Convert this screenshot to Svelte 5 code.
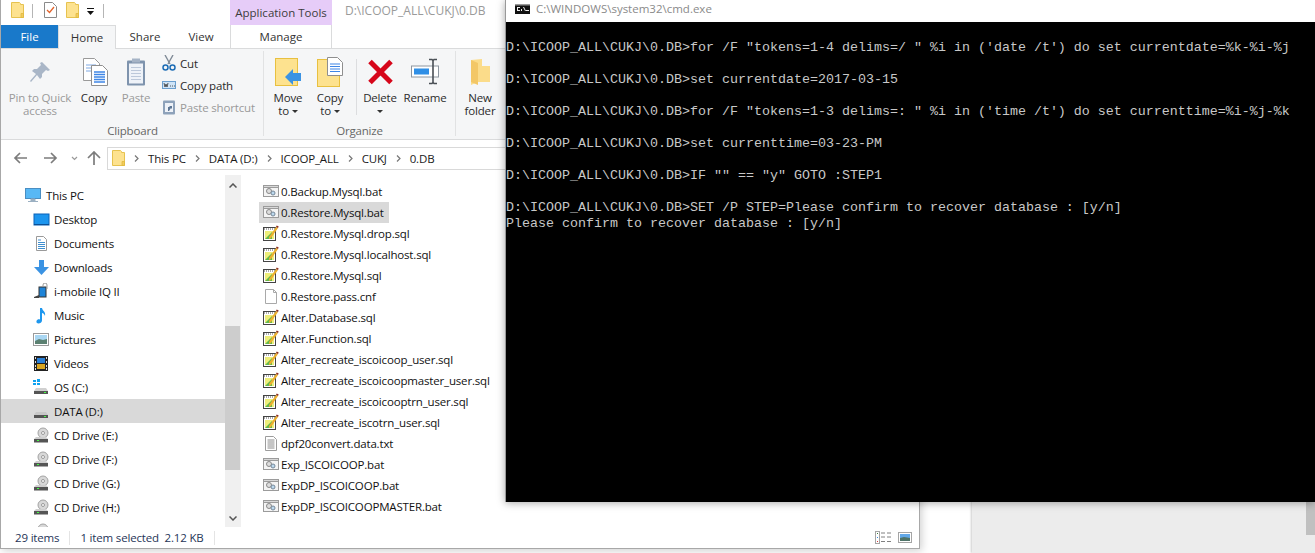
<script lang="ts">
  const navItems = [
    { label: "Desktop", icon: "desktop" },
    { label: "Documents", icon: "documents" },
    { label: "Downloads", icon: "downloads" },
    { label: "i-mobile IQ II", icon: "phone" },
    { label: "Music", icon: "music" },
    { label: "Pictures", icon: "pictures" },
    { label: "Videos", icon: "videos" },
    { label: "OS (C:)", icon: "osdrive" },
    { label: "DATA (D:)", icon: "drive", active: true },
    { label: "CD Drive (E:)", icon: "cd" },
    { label: "CD Drive (F:)", icon: "cd" },
    { label: "CD Drive (G:)", icon: "cd" },
    { label: "CD Drive (H:)", icon: "cd" },
    { label: "", icon: "cd" },
  ];

  const files = [
    { name: "0.Backup.Mysql.bat", kind: "bat" },
    { name: "0.Restore.Mysql.bat", kind: "bat", selected: true },
    { name: "0.Restore.Mysql.drop.sql", kind: "sql" },
    { name: "0.Restore.Mysql.localhost.sql", kind: "sql" },
    { name: "0.Restore.Mysql.sql", kind: "sql" },
    { name: "0.Restore.pass.cnf", kind: "cnf" },
    { name: "Alter.Database.sql", kind: "sql" },
    { name: "Alter.Function.sql", kind: "sql" },
    { name: "Alter_recreate_iscoicoop_user.sql", kind: "sql" },
    { name: "Alter_recreate_iscoicoopmaster_user.sql", kind: "sql" },
    { name: "Alter_recreate_iscoicooptrn_user.sql", kind: "sql" },
    { name: "Alter_recreate_iscotrn_user.sql", kind: "sql" },
    { name: "dpf20convert.data.txt", kind: "txt" },
    { name: "Exp_ISCOICOOP.bat", kind: "bat" },
    { name: "ExpDP_ISCOICOOP.bat", kind: "bat" },
    { name: "ExpDP_ISCOICOOPMASTER.bat", kind: "bat" },
  ];

  const crumbs = ["This PC", "DATA (D:)", "ICOOP_ALL", "CUKJ", "0.DB"];

  const prompt = "D:\\ICOOP_ALL\\CUKJ\\0.DB>";
  const cmdText = [
    "",
    prompt + `for /F "tokens=1-4 delims=/ " %i in ('date /t') do set currentdate=%k-%i-%j`,
    "",
    prompt + "set currentdate=2017-03-15",
    "",
    prompt + `for /F "tokens=1-3 delims=: " %i in ('time /t') do set currenttime=%i-%j-%k`,
    "",
    prompt + "set currenttime=03-23-PM",
    "",
    prompt + `IF "" == "y" GOTO :STEP1`,
    "",
    prompt + "SET /P STEP=Please confirm to recover database : [y/n]",
    "Please confirm to recover database : [y/n]",
  ].join("\n");
</script>

{#snippet folderSmall()}
  <svg width="13" height="16" viewBox="0 0 13 16">
    <path d="M.5.5h8l1 1v1h3v13H.5z" fill="#fde28f" stroke="#e6c24f" />
    <path d="M10 11.500h2.500v4H10z" fill="#f2cc5c" stroke="#e0b93f" stroke-width=".8" />
  </svg>
{/snippet}

{#snippet navIcon(kind: string)}
  <svg width="17" height="17" viewBox="0 0 17 17">
    {#if kind === "desktop"}
      <rect x="1" y="3" width="15" height="11" fill="#1c95ee" stroke="#0a63b8" />
      <path d="M1 13h15v1H1z" fill="#0b4f95" />
    {:else if kind === "documents"}
      <path d="M3.500 1.500h7l3 3v11h-10z" fill="#fff" stroke="#9a9a9a" />
      <path d="M5 5h3M5 7.500h7M5 9.500h7M5 11.500h7M5 13.500h7" stroke="#3f8fd0" />
    {:else if kind === "downloads"}
      <path d="M6 1h5v7h5l-7.500 8L1 8h5z" fill="#3b93e3" />
    {:else if kind === "phone"}
      <rect x="6" y="4" width="7" height="10" fill="#1e84d8" stroke="#333" />
      <path d="M10 4V2a2 2 0 0 1 4 0v4" fill="none" stroke="#999" />
      <path d="M1 14l5-2v3H1z" fill="#444" />
    {:else if kind === "music"}
      <path d="M7 1h2c.500 3 4 3.500 3 8-.500-2-2-3-3-3v7.500c0 2-2 3-3.500 3S3 15.500 3.500 14s2-2 3.500-1.500z" fill="#1e97ee" />
    {:else if kind === "pictures"}
      <rect x=".5" y="2.500" width="15" height="12" fill="#fff" stroke="#9a9a9a" />
      <rect x="2" y="4" width="12" height="9" fill="#a9d6f2" />
      <path d="M2 10l4-2 4 1 4-1v5H2z" fill="#5b8071" />
    {:else if kind === "videos"}
      <rect x="1" y="1" width="14" height="15" fill="#222" />
      <rect x="4" y="3" width="8" height="5" fill="#2a7fd6" />
      <rect x="4" y="9" width="8" height="5" fill="#d9a520" />
      <path d="M2 2h1v2H2zM2 6h1v2H2zM2 10h1v2H2zM2 13h1v2H2zM13 2h1v2h-1zM13 6h1v2h-1zM13 10h1v2h-1zM13 13h1v2h-1z" fill="#ddd" />
    {:else if kind === "osdrive"}
      <path d="M0 1h3v2H0zM4 0h3v3H4zM0 4h3v2H0zM4 4h3v2H4z" fill="#0fa2f0" />
      <path d="M3 9h10l2 3H1z" fill="#d0d0d0" />
      <rect x="1" y="12" width="14" height="3" fill="#555" />
      <rect x="11" y="13" width="2" height="1" fill="#4f4" />
    {:else if kind === "drive"}
      <path d="M3 9h10l2 3H1z" fill="#c8c8c8" />
      <rect x="1" y="12" width="14" height="3" fill="#555" />
      <rect x="11" y="13" width="2" height="1" fill="#4f4" />
    {:else}
      <circle cx="10" cy="6" r="5" fill="#d8d8d8" stroke="#a3a3a3" />
      <circle cx="10" cy="6" r="1.500" fill="#fff" stroke="#999" />
      <path d="M3 10h10l2 2H1z" fill="#cfcfcf" />
      <rect x="1" y="12" width="14" height="3.500" fill="#555" />
      <rect x="4" y="13" width="2" height="1" fill="#4f4" />
    {/if}
  </svg>
{/snippet}

{#snippet fileIcon(kind: string)}
  <svg width="17" height="17" viewBox="0 0 17 17">
    {#if kind === "bat"}
      <rect x=".5" y="2.500" width="15" height="11" fill="#f4f4f4" stroke="#9b9b9b" />
      <rect x=".5" y="2.500" width="15" height="2" fill="#d8d8d8" stroke="#9b9b9b" />
      <circle cx="6" cy="8" r="2.500" fill="#ddd" stroke="#888" />
      <circle cx="10" cy="10" r="2" fill="#bcd9ee" stroke="#789" />
    {:else if kind === "sql"}
      <rect x=".5" y="2.500" width="12" height="13" fill="#fff" stroke="#444" />
      <path d="M1 4h11" stroke="#aaa" stroke-dasharray="1 1" stroke-width="2" />
      <rect x="2" y="6" width="9" height="8" fill="#eeee7a" />
      <path d="M2 14l7-7v7z" fill="#63b84c" />
      <path d="M6 12l7-10 2 1-7 10-2 1z" fill="#ecb030" />
      <path d="M13 2l2 1 .7-1.500-2-1z" fill="#8a2c1c" />
    {:else if kind === "cnf"}
      <path d="M2.500 1.500h8l3 3v11h-11z" fill="#fff" stroke="#a9a9a9" />
      <path d="M10.500 1.500v3h3" fill="none" stroke="#a9a9a9" />
    {:else}
      <path d="M2.500 1.500h8l3 3v11h-11z" fill="#fff" stroke="#9c9c9c" />
      <path d="M4.500 5h7M4.500 7h7M4.500 9h7M4.500 11h7M4.500 13h7" stroke="#8c8c8c" />
    {/if}
  </svg>
{/snippet}

<div class="desktop">
  <div class="back-window">
    <div class="back-thumb"></div>
  </div>

  <section class="explorer">
    <header class="titlebar">
      <div class="qat">
        <span class="qat-icon">{@render folderSmall()}</span>
        <span class="qat-sep"></span>
        <svg class="qat-doc" width="13" height="16" viewBox="0 0 13 16">
          <path d="M.5.5h8l4 4v11H.5z" fill="#fff" stroke="#8a8a8a" />
          <path d="M3 8l2.500 2.500L10 5" fill="none" stroke="#e2622a" stroke-width="1.300" />
        </svg>
        <span class="qat-icon">{@render folderSmall()}</span>
        <svg class="qat-arrow" width="7" height="7" viewBox="0 0 7 7">
          <path d="M0 0h7v1H0zM0 3h7L3.500 7z" fill="#111" />
        </svg>
        <span class="qat-sep last"></span>
      </div>
      <div class="context-title">Application Tools</div>
      <div class="win-title">D:\ICOOP_ALL\CUKJ\0.DB</div>
    </header>

    <nav class="tabs">
      <span class="tab file">File</span>
      <span class="tab home">Home</span>
      <span class="tab share">Share</span>
      <span class="tab view">View</span>
      <span class="tab manage">Manage</span>
    </nav>

    <div class="ribbon">
      <div class="group clipboard">
        <div class="group-body">
          <div class="big dim" style="width:76px">
            <svg class="big-icon" width="22" height="22" viewBox="0 0 22 22">
              <path d="M13 1l8 8-2 1-2-1-4 4 0 3-2 2-3-4-6 7-1-1 6-7-4-3 2-2 3 0 4-4-1-2z" fill="#a9b6c7" />
            </svg>
            <span>Pin to Quick<br />access</span>
          </div>
          <div class="big" style="width:32px">
            <svg class="big-icon shift" width="25" height="28" viewBox="0 0 25 28">
              <path d="M.5.500h11l5 5v17H.5z" fill="#fff" stroke="#9a9a9a" />
              <path d="M3 7h10M3 10h10M3 13h10" stroke="#7ea9e4" />
              <path d="M8.500 7.500h11l5 5v15h-16z" fill="#fff" stroke="#8f8f8f" />
              <path d="M11 14h11M11 16.500h11M11 19h11M11 21.500h11M11 24h11" stroke="#3f86e6" stroke-width="1.300" />
            </svg>
            <span>Copy</span>
          </div>
          <div class="big dim" style="width:52px">
            <svg class="big-icon" width="20" height="29" viewBox="0 0 20 29">
              <rect x="1" y="3" width="18" height="25" rx="1" fill="#7e93ad" />
              <rect x="3" y="6" width="14" height="20" fill="#eef2f8" />
              <path d="M5 10h10M5 13h10M5 16h10M5 19h10M5 22h10" stroke="#bcc8da" />
              <rect x="6" y="1" width="8" height="4" fill="#a5b3c6" />
            </svg>
            <span>Paste</span>
          </div>
          <div class="small-col">
            <div class="small">
              <svg width="14" height="16" viewBox="0 0 14 16">
                <path d="M3 0l5 9M11 0L6 9" stroke="#7f8a96" stroke-width="1.400" />
                <circle cx="3.500" cy="12.500" r="2.500" fill="none" stroke="#1d6db5" stroke-width="1.500" />
                <circle cx="10.500" cy="12.500" r="2.500" fill="none" stroke="#1d6db5" stroke-width="1.500" />
              </svg>
              <span>Cut</span>
            </div>
            <div class="small">
              <svg width="14" height="16" viewBox="0 0 14 16">
                <rect x=".5" y="4.500" width="13" height="7" fill="#cfe4f7" stroke="#6b9fcf" />
                <path d="M2 6l1 4 1-3 1 3 1-4M8 9h1M10 9h1M12 9h1" stroke="#333" stroke-width=".8" fill="none" />
              </svg>
              <span>Copy path</span>
            </div>
            <div class="small dim">
              <svg width="14" height="16" viewBox="0 0 14 16">
                <rect x="1" y="1.500" width="12" height="14" rx="1" fill="#8ea2ba" />
                <rect x="3" y="4" width="8" height="9" fill="#eef2f8" />
                <path d="M6 12V8h2l-1-1h3v3l-1-1-2 3z" fill="#5e7795" />
              </svg>
              <span>Paste shortcut</span>
            </div>
          </div>
        </div>
        <div class="group-label">Clipboard</div>
      </div>

      <div class="group organize">
        <div class="group-body">
          <div class="big" style="width:48px">
            <svg class="big-icon" width="27" height="28" viewBox="0 0 27 28">
              <rect x=".5" y=".5" width="22" height="27" fill="#fde28f" stroke="#e8c040" />
              <path d="M10 19l8-8v4h8v8h-8v4z" fill="#3b93e3" />
            </svg>
            <span>Move<br />to <i class="caret"></i></span>
          </div>
          <div class="big" style="width:36px">
            <svg class="big-icon" width="27" height="30" viewBox="0 0 27 30">
              <rect x=".5" y="2.500" width="22" height="27" fill="#fde28f" stroke="#e8c040" />
              <path d="M10.500.5h10l5 5v13h-15z" fill="#fff" stroke="#8f8f8f" />
              <path d="M13 7h10M13 9.500h10M13 12h10M13 14.500h10" stroke="#3f86e6" stroke-width="1.200" />
            </svg>
            <span>Copy<br />to <i class="caret"></i></span>
          </div>
          <span class="vsep"></span>
          <div class="big" style="width:46px">
            <svg class="big-icon" width="27" height="27" viewBox="0 0 27 27">
              <path d="M3 3l21 21M24 3L3 24" stroke="#d6061a" stroke-width="5" />
            </svg>
            <span>Delete<br /><i class="caret"></i></span>
          </div>
          <div class="big" style="width:44px">
            <svg class="big-icon" width="29" height="27" viewBox="0 0 29 27">
              <rect x=".5" y="7.500" width="27" height="11" fill="#fff" stroke="#8d96a0" />
              <rect x="3" y="10" width="15" height="6" fill="#2f8fe6" />
              <path d="M18 1h3l1 1 1-1h3M22 2v22M18 25h3l1-1 1 1h3" fill="none" stroke="#4a4f55" stroke-width="1.600" />
            </svg>
            <span>Rename</span>
          </div>
        </div>
        <div class="group-label">Organize</div>
      </div>

      <div class="group newgroup">
        <div class="group-body">
          <div class="big" style="width:48px">
            <svg class="big-icon" width="20" height="28" viewBox="0 0 20 28">
              <path d="M1 2l11-1v7h8v16l-12 0-7 3z" fill="#fbdc8a" />
              <path d="M1 2l7 3v22l-7-3z" fill="#f3c766" />
            </svg>
            <span>New<br />folder</span>
          </div>
        </div>
      </div>
    </div>

    <div class="addressbar">
      <svg class="nav-btns" width="89" height="14" viewBox="0 0 89 14">
        <path d="M2 7h12M7 2L2 7l5 5" fill="none" stroke="#7c7c7c" stroke-width="1.700" />
        <path d="M31 7h12M38 2l5 5-5 5" fill="none" stroke="#7c7c7c" stroke-width="1.700" />
        <path d="M59 6l2.500 2.500L64 6" fill="none" stroke="#9a9a9a" stroke-width="1.200" />
        <path d="M75 7l6-6 6 6M81 1v13" fill="none" stroke="#7c7c7c" stroke-width="1.700" />
      </svg>
      <div class="address">
        <span class="addr-folder">{@render folderSmall()}</span>
        {#each crumbs as crumb}
          <svg class="chev" width="5" height="7" viewBox="0 0 5 7">
            <path d="M1 .5l3 3-3 3" fill="none" stroke="#777" stroke-width="1.200" />
          </svg>
          <span class="crumb">{crumb}</span>
        {/each}
      </div>
    </div>

    <div class="panes">
      <aside class="navpane">
        <ul class="navlist">
          <li class="nav-row root">
            <svg width="17" height="17" viewBox="0 0 17 17">
              <rect x=".5" y="1.500" width="15" height="10" fill="#58b8f5" stroke="#4a8ec2" />
              <path d="M6 12h4v2H6zM3 14.500h10" stroke="#9bb0c2" fill="#9bb0c2" />
            </svg>
            <span>This PC</span>
          </li>
          {#each navItems as item}
            <li class="nav-row" class:active={item.active}>
              {@render navIcon(item.icon)}
              <span>{item.label}</span>
            </li>
          {/each}
        </ul>
        <div class="scrollbar">
          <svg class="sb-arrow" width="8" height="5" viewBox="0 0 8 5">
            <path d="M.5 4.500L4 1l3.500 3.500" fill="none" stroke="#555" stroke-width="1.500" />
          </svg>
          <div class="sb-thumb"></div>
          <svg class="sb-arrow" width="8" height="5" viewBox="0 0 8 5">
            <path d="M.5.500L4 4 7.500.5" fill="none" stroke="#555" stroke-width="1.500" />
          </svg>
        </div>
      </aside>

      <ul class="filelist">
        {#each files as file}
          <li class="file-row" class:selected={file.selected}>
            {@render fileIcon(file.kind)}
            <span>{file.name}</span>
          </li>
        {/each}
      </ul>
    </div>

    <footer class="statusbar">
      <span class="st-count">29 items</span>
      <span class="st-sep"></span>
      <span class="st-sel">1 item selected &nbsp;2.12 KB</span>
      <span class="st-sep"></span>
      <div class="view-btns">
        <svg width="16" height="13" viewBox="0 0 16 13">
          <rect x=".5" y=".5" width="4" height="12" fill="#fff" stroke="#a5a5a5" />
          <path d="M2 2h1v1H2z" fill="#3a7a3a" /><path d="M2 6h1v1H2z" fill="#3a8ae0" /><path d="M2 10h1v1H2z" fill="#d83a3a" />
          <path d="M6 2h4M12 2h4M6 6h4M12 6h4M6 10.500h4M12 10.500h4" stroke="#808080" />
        </svg>
        <svg width="14" height="11" viewBox="0 0 14 11">
          <rect x=".5" y=".5" width="13" height="10" fill="#fff" stroke="#a5a5a5" />
          <rect x="2" y="2" width="10" height="7" fill="#62a8e8" />
          <path d="M2 6l4-1 6 1v3H2z" fill="#4f7368" />
        </svg>
      </div>
    </footer>
  </section>

  <section class="cmd">
    <header class="cmd-title">
      <svg width="15" height="10" viewBox="0 0 15 10">
        <rect width="15" height="10" fill="#111" />
        <rect width="15" height="1.500" fill="#999" />
        <path d="M2 3h3v1H3v2h2v1H2zM6 5h1v2H6zM8 3h1l2 4h-1zM11 6h3v1h-3z" fill="#eee" />
      </svg>
      <span>C:\WINDOWS\system32\cmd.exe</span>
    </header>
    <pre class="console">{cmdText}</pre>
  </section>
</div>

<style>
  :global(body) {
    margin: 0;
    overflow: hidden;
  }
  ul {
    list-style: none;
    margin: 0;
    padding: 0;
  }
  .desktop {
    position: relative;
    width: 1315px;
    height: 553px;
    overflow: hidden;
    background: #fff;
    font-family: "Open Sans", "Noto Sans", sans-serif;
    font-size: 11.5px;
    letter-spacing: -0.17px;
    color: #111;
  }

  /* windows stacked on the desktop */
  .back-window {
    position: absolute;
    left: 972px;
    top: 0;
    right: 0;
    bottom: 0;
    background: #ececec;
    box-shadow: -1px 0 2px rgba(0, 0, 0, 0.2);
  }
  .back-thumb {
    position: absolute;
    right: 0;
    top: 480px;
    width: 9px;
    height: 55px;
    background: #c0c0c0;
  }
  .explorer {
    position: absolute;
    left: 0;
    top: 0;
    width: 918px;
    height: 548px;
    background: #fff;
    border-left: 1px solid #a8a8a8;
    border-right: 1px solid #a8a8a8;
    border-bottom: 1px solid #a8a8a8;
    box-shadow: 2px 2px 8px rgba(0, 0, 0, 0.18);
    display: flex;
    flex-direction: column;
  }
  .cmd {
    position: absolute;
    left: 505px;
    top: 0;
    width: 810px;
    height: 502px;
    display: flex;
    flex-direction: column;
    box-shadow: 0 1px 8px rgba(0, 0, 0, 0.35);
    border-left: 1px solid #999;
    box-sizing: border-box;
  }

  /* title bar */
  .titlebar {
    height: 25px;
    display: flex;
    flex: none;
  }
  .qat {
    width: 229px;
    display: flex;
    align-items: flex-start;
    padding: 2px 0 0 10px;
    box-sizing: border-box;
  }
  .qat-icon {
    display: block;
    height: 16px;
  }
  .qat-sep {
    width: 1px;
    height: 14px;
    background: #b5b5b5;
    margin: 2px 11px 0 8px;
  }
  .qat-sep.last {
    margin: 2px 0 0 9px;
  }
  .qat-doc {
    margin-right: 9px;
  }
  .qat-arrow {
    margin: 6px 0 0 8px;
  }
  .context-title {
    width: 102px;
    background: #e6ccf8;
    text-align: center;
    line-height: 25px;
    color: #3c3c3c;
    letter-spacing: 0;
  }
  .win-title {
    padding-left: 13px;
    line-height: 21px;
    color: #9a9a9a;
    font-size: 12px;
    letter-spacing: 0;
  }

  /* tabs */
  .tabs {
    height: 23px;
    display: flex;
    flex: none;
    position: relative;
  }
  .tab {
    line-height: 23px;
    text-align: center;
    color: #333;
    box-sizing: border-box;
    letter-spacing: 0;
  }
  .file {
    width: 57px;
    background: #1979ca;
    color: #fff;
  }
  .home {
    width: 58px;
    border: 1px solid #dadbdc;
    border-bottom: none;
    position: relative;
    z-index: 1;
    background: #f5f6f7;
    height: 24px;
  }
  .share {
    width: 58px;
  }
  .view {
    width: 54px;
  }
  .manage {
    width: 102px;
    margin-left: 2px;
    border-left: 1px solid #dadbdc;
    border-right: 1px solid #dadbdc;
  }

  /* ribbon */
  .ribbon {
    height: 92px;
    background: #f5f6f7;
    border-top: 1px solid #dadbdc;
    border-bottom: 1px solid #dadbdc;
    display: flex;
    flex: none;
    box-sizing: border-box;
    color: #2b2b2b;
  }
  .group {
    border-right: 1px solid #e1e2e3;
    display: flex;
    flex-direction: column;
    margin: 2px 0 3px;
    height: 85px;
  }
  .clipboard {
    width: 263px;
    padding-left: 1px;
    box-sizing: border-box;
  }
  .organize {
    width: 191px;
  }
  .newgroup {
    width: 60px;
    border-right: none;
  }
  .group-body {
    height: 72px;
    flex: none;
    display: flex;
  }
  .group-label {
    text-align: center;
    color: #666;
    line-height: 16px;
    height: 13px;
  }
  .big {
    display: flex;
    flex-direction: column;
    align-items: center;
    text-align: center;
    line-height: 13px;
    flex: none;
  }
  .big-icon {
    height: 30px;
    margin: 6px 0 4px;
    flex: none;
  }
  .big-icon.shift {
    margin-left: 2px;
  }
  .dim {
    color: #9a9a9a;
  }
  .caret {
    display: inline-block;
    width: 0;
    height: 0;
    border: 3px solid transparent;
    border-top: 3px solid #333;
    border-bottom: none;
    vertical-align: middle;
  }
  .vsep {
    width: 1px;
    height: 56px;
    background: #dcdddf;
    margin: 8px 0 0 8px;
    flex: none;
  }
  .small-col {
    display: flex;
    flex-direction: column;
    padding-top: 1px;
  }
  .small {
    display: flex;
    align-items: center;
    gap: 4px;
    height: 22px;
  }

  /* address bar */
  .addressbar {
    height: 35px;
    flex: none;
    display: flex;
    align-items: center;
    padding-left: 12px;
    gap: 5px;
  }
  .address {
    flex: 1;
    height: 21px;
    border: 1px solid #d9d9d9;
    display: flex;
    align-items: center;
    padding-left: 4px;
    margin-top: 1px;
  }
  .addr-folder {
    height: 16px;
    margin-right: 9px;
  }
  .chev {
    margin-right: 9px;
  }
  .crumb {
    margin-right: 9px;
    color: #1a1a1a;
  }

  /* panes */
  .panes {
    flex: 1;
    display: flex;
    min-height: 0;
  }
  .navpane {
    width: 240px;
    flex: none;
    display: flex;
  }
  .navlist {
    width: 224px;
    overflow: hidden;
    padding-top: 8px;
    box-sizing: border-box;
  }
  .nav-row {
    height: 24px;
    display: flex;
    align-items: center;
    gap: 4px;
    padding-left: 32px;
  }
  .nav-row.root {
    padding-left: 24px;
  }
  .nav-row.active {
    background: #d9d9d9;
  }
  .scrollbar {
    width: 16px;
    background: #f0f0f0;
    display: flex;
    flex-direction: column;
    align-items: center;
    justify-content: space-between;
    padding: 8px 0 6px;
    box-sizing: border-box;
    position: relative;
  }
  .sb-thumb {
    position: absolute;
    left: 0;
    top: 151px;
    width: 15px;
    height: 144px;
    background: #cdcdcd;
  }
  .filelist {
    padding: 6px 0 0 18px;
  }
  .file-row {
    height: 21px;
    display: flex;
    align-items: center;
    gap: 1px;
    padding-left: 4px;
    width: fit-content;
    padding-right: 5px;
    white-space: nowrap;
  }
  .file-row.selected {
    background: #d9d9d9;
  }

  /* status bar */
  .statusbar {
    height: 21px;
    flex: none;
    display: flex;
    align-items: center;
    color: #1f3558;
    padding-left: 14px;
  }
  .st-sep {
    width: 1px;
    height: 14px;
    background: #e4e4e4;
    margin: 0 10px;
  }
  .view-btns {
    margin-left: auto;
    margin-right: 7px;
    display: flex;
    align-items: center;
    gap: 7px;
  }

  /* console */
  .cmd-title {
    height: 22px;
    background: #fff;
    display: flex;
    align-items: center;
    gap: 6px;
    padding: 0 0 5px 9px;
    box-sizing: border-box;
    color: #8a8a8a;
    flex: none;
    letter-spacing: 0;
  }
  .console {
    flex: 1;
    margin: 0;
    padding-top: 2px;
    background: #000;
    color: #c8c8c8;
    font-family: "Liberation Mono", monospace;
    font-size: 13.333px;
    line-height: 16px;
    letter-spacing: 0;
  }
</style>
